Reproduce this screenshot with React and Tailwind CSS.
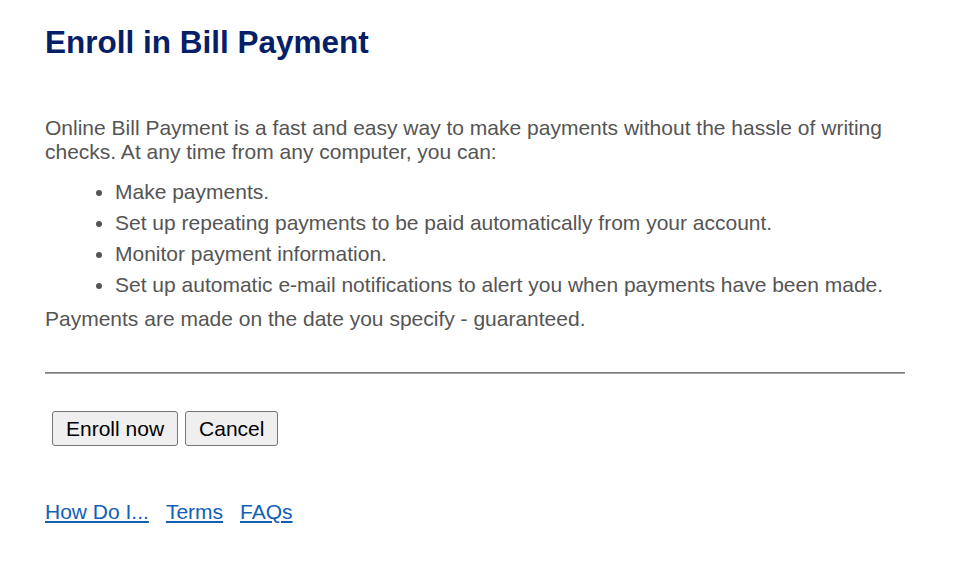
import React from "react";

const items = [
  "Make payments.",
  "Set up repeating payments to be paid automatically from your account.",
  "Monitor payment information.",
  "Set up automatic e-mail notifications to alert you when payments have been made.",
];

const App = () => {
  return (
    <div className="min-h-screen bg-white font-['Liberation_Sans',Arial,sans-serif] text-[#555555]">
      <div className="w-[860px] ml-[45px] pt-[24px]">
        <h1 className="text-[31.5px] leading-[36px] font-bold text-[#062068]">
          Enroll in Bill Payment
        </h1>

        <div className="mt-[56px] text-[21px] leading-[24px]">
          <p>
            Online Bill Payment is a fast and easy way to make payments without the hassle of writing
            checks. At any time from any computer, you can:
          </p>
          <ul className="list-disc pl-[70px] mt-[12px] mb-[7px]">
            {items.map((item) => (
              <li key={item} className="py-[3.5px] marker:text-[#555555]">
                {item}
              </li>
            ))}
          </ul>
          <p>Payments are made on the date you specify - guaranteed.</p>
        </div>

        <div className="mt-[41px] border-t border-b border-t-[#808080] border-b-[#a0a0a0]" />

        <div className="mt-[37px] ml-[7px] flex gap-[7px]">
          <button className="h-[35px] px-[13px] text-[21px] text-black bg-[#efefef] border border-[#767676] rounded-[3px]">
            Enroll now
          </button>
          <button className="h-[35px] px-[13px] text-[21px] text-black bg-[#efefef] border border-[#767676] rounded-[3px]">
            Cancel
          </button>
        </div>

        <div className="mt-[54px] flex gap-[17px] text-[21px] leading-[24px] text-[#1160b6]">
          <a href="#" className="underline">How Do I...</a>
          <a href="#" className="underline">Terms</a>
          <a href="#" className="underline">FAQs</a>
        </div>
      </div>
    </div>
  );
};

export default App;
